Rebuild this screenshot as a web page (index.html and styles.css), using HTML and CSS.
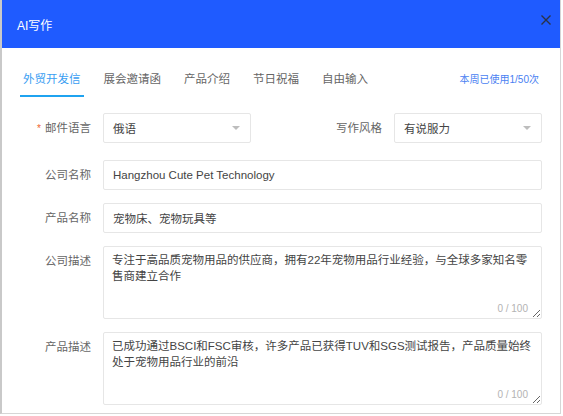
FILE: index.html
```html
<!DOCTYPE html>
<html lang="zh-CN">
<head>
<meta charset="utf-8">
<title>AI写作</title>
<link rel="stylesheet" href="styles.css">
</head>
<body>
<div class="modal">
  <div class="modal-header">
    <span class="modal-title">AI写作</span>
    <button class="close" aria-label="关闭">
      <svg width="10" height="10" viewBox="0 0 10 10"><path d="M0.5 0.5L9.5 9.5M9.5 0.5L0.5 9.5" stroke="#2b3346" stroke-width="1.4" fill="none"/></svg>
    </button>
  </div>
  <div class="tabs">
    <span class="tab active">外贸开发信</span>
    <span class="tab">展会邀请函</span>
    <span class="tab">产品介绍</span>
    <span class="tab">节日祝福</span>
    <span class="tab">自由输入</span>
    <span class="usage">本周已使用1/50次</span>
  </div>
  <form class="form">
    <div class="row row-first">
      <label class="label"><span class="req">*</span>邮件语言</label>
      <div class="select"><span>俄语</span><i class="caret"></i></div>
      <label class="label">写作风格</label>
      <div class="select"><span>有说服力</span><i class="caret"></i></div>
    </div>
    <div class="row">
      <label class="label">公司名称</label>
      <div class="input">Hangzhou Cute Pet Technology</div>
    </div>
    <div class="row">
      <label class="label">产品名称</label>
      <div class="input">宠物床、宠物玩具等</div>
    </div>
    <div class="row row-top">
      <label class="label">公司描述</label>
      <div class="area">
        <textarea wrap="off">专注于高品质宠物用品的供应商，拥有22年宠物用品行业经验，与全球多家知名零
售商建立合作</textarea>
        <span class="count">0 / 100</span>
      </div>
    </div>
    <div class="row row-top">
      <label class="label">产品描述</label>
      <div class="area">
        <textarea wrap="off">已成功通过BSCI和FSC审核，许多产品已获得TUV和SGS测试报告，产品质量始终
处于宠物用品行业的前沿</textarea>
        <span class="count">0 / 100</span>
      </div>
    </div>
  </form>
</div>
</body>
</html>
```
FILE: styles.css
```css
* { box-sizing: border-box; }
html, body { margin: 0; padding: 0; background: #fff; }
body {
  font-family: "Liberation Sans", "Noto Sans CJK SC", sans-serif;
  font-size: 11.5px;
  color: #444;
}
.modal {
  width: 561px;
  height: 414px;
  border-left: 2px solid #c9c9c9;
  border-right: 1px solid #d6d6d6;
  border-bottom: 1px solid #d6d6d6;
  background: #fff;
}
.modal-header {
  height: 48px;
  background: #1f5bff;
  display: flex;
  align-items: center;
  justify-content: space-between;
  padding: 0 9px 0 15px;
}
.modal-title {
  color: #fff;
  font-size: 12px;
  line-height: 16px;
  margin-top: 3px;
}
.close {
  border: 0;
  background: none;
  padding: 0;
  width: 10px;
  height: 10px;
  display: flex;
  margin-top: -9px;
}
.tabs {
  display: flex;
  align-items: flex-start;
  padding: 21px 21px 0 21px;
}
.tab {
  position: relative;
  line-height: 20px;
  padding-bottom: 6px;
  margin-right: 23px;
  color: #666;
  border-bottom: 2px solid transparent;
}
.tab.active {
  color: #3a9ef2;
}
.tab.active::after {
  content: "";
  position: absolute;
  left: -3px;
  right: -3px;
  bottom: -2px;
  height: 2px;
  background: #1fa3f0;
}
.usage {
  margin-left: auto;
  font-size: 10px;
  line-height: 20px;
  color: #4a7ff2;
  margin-top: 1px;
}
.form {
  display: flex;
  flex-direction: column;
  gap: 13px;
  margin: 16px 0 0 0;
  padding-right: 18px;
}
.row {
  display: flex;
  align-items: center;
  gap: 12px;
}
.row-first { margin-bottom: 4px; }
.row-top { align-items: flex-start; }
.label {
  width: 89px;
  flex: none;
  text-align: right;
  color: #666;
  line-height: 16px;
}
.row-first .label:nth-of-type(2) {
  width: auto;
  flex: 1;
}
.row-top .label { padding-top: 7px; }
.req {
  color: #f0642e;
  margin-right: 4px;
  font-size: 10px;
}
.select {
  width: 148px;
  height: 30px;
  border: 1px solid #e6e6e6;
  border-radius: 2px;
  display: flex;
  align-items: center;
  justify-content: space-between;
  padding: 0 10px 0 9px;
  color: #444;
}
.caret {
  width: 0;
  height: 0;
  border-left: 4px solid transparent;
  border-right: 4px solid transparent;
  border-top: 4px solid #bdbdbd;
}
.input {
  flex: 1;
  height: 30px;
  border: 1px solid #e6e6e6;
  border-radius: 2px;
  padding: 0 9px;
  display: flex;
  align-items: center;
  color: #444;
}
.area {
  position: relative;
  flex: 1;
  height: 73px;
}
.area textarea {
  display: block;
  width: 100%;
  height: 73px;
  border: 1px solid #e6e6e6;
  border-radius: 2px;
  padding: 5px 8px;
  font: inherit;
  line-height: 16px;
  color: #444;
  overflow: hidden;
  resize: both;
  outline: none;
}
.count {
  position: absolute;
  right: 14px;
  bottom: 3px;
  font-size: 10px;
  color: #b3b3b3;
  line-height: 14px;
}
```
